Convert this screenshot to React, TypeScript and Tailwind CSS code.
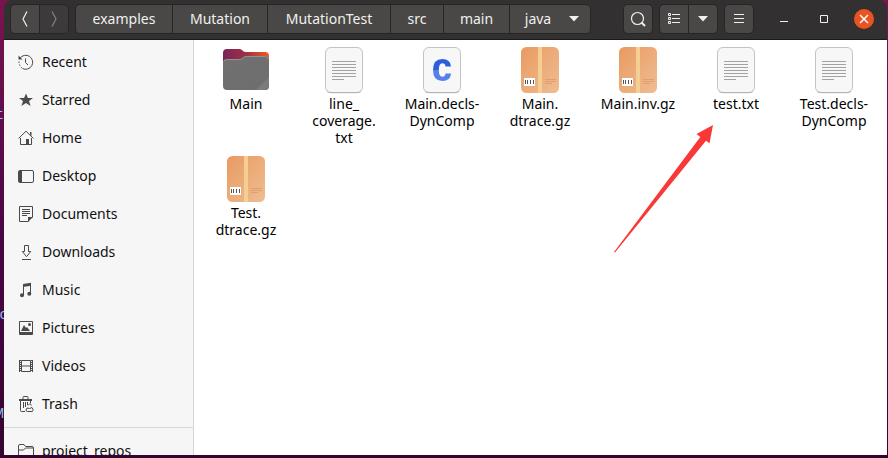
import type { ReactNode } from "react";

type IconName =
  | "recent" | "star" | "home" | "desktop" | "documents"
  | "downloads" | "music" | "pictures" | "videos" | "trash" | "folder";

const iconShapes: Record<IconName, ReactNode> = {
  recent: (
    <>
      <path d="M2 4.200A7 7 0 1 1 4.500 14.500" />
      <path d="M1 7.500Q1 12 4.500 14.500" strokeDasharray="1.500 1.500" />
      <path d="M.5 1.500V5.500H4.500Z" fill="currentColor" stroke="none" />
      <path d="M7.500 4.500V8.500L10 11" />
    </>
  ),
  star: <path d="M8 1.500 9.900 6H15L11 9.100 12.600 14 8 11 3.400 14 5 9.100 1 6H6.100Z" fill="currentColor" stroke="none" />,
  home: (
    <>
      <path d="M.6 8.400 8 1.200 15.400 8.400M2.500 8V14.500H13.500V8" />
      <path d="M8 9h3v6H8zM12 2h1.500v4L12 4.600z" fill="currentColor" stroke="none" />
    </>
  ),
  desktop: (
    <>
      <rect x=".5" y="2.500" width="15" height="12" rx="1.500" />
      <path d="M1 3h3v11H1z" fill="currentColor" stroke="none" />
    </>
  ),
  documents: (
    <>
      <path d="M10.500 15.500h-9V.5h13V11.500M4 3.500h8M4 5.500h8M4 7.500h8M4 9.500h5" />
      <path d="M10 16v-5h5z" fill="currentColor" stroke="none" />
    </>
  ),
  downloads: <path d="M6.500 1.500h4v6h2.200L8.500 12.700 4.300 7.500h2.200zM4 15.500h9" />,
  music: (
    <>
      <path d="M5.500 13V3M12.500 11.500V2" />
      <path d="M5 2 13 .8V3.800L5 5Z" fill="currentColor" stroke="none" />
      <circle cx="4" cy="13.200" r="2" fill="currentColor" stroke="none" />
      <circle cx="11.300" cy="11.800" r="2" fill="currentColor" stroke="none" />
    </>
  ),
  pictures: (
    <>
      <path d="M1.500 1.500h13v13h-13z" />
      <path d="M2 12h12v3H2zM3 11 6 5l2 3 1-1 3 4z" fill="currentColor" stroke="none" />
      <circle cx="11.500" cy="4.500" r="1.500" fill="currentColor" stroke="none" />
    </>
  ),
  videos: (
    <>
      <path d="M3.500 2.500h9v11h-9zM3 8h10M1.500 2v12M14.500 2v12" />
      <path d="M2.500 2v12M13.500 2v12" strokeDasharray="1 1" />
    </>
  ),
  trash: (
    <>
      <path d="M2.500 5v9.500q0 1 1 1H7M5.500 6v6M7.500 6v5M9.500 6v3M12.500 5v2" />
      <path d="M1 3h13v2H1z" fill="currentColor" stroke="none" />
      <path d="M5 3V1.500q0-1 1-1h3q1 0 1 1V3" />
      <path d="M10 9.500l2-2 1.500 2M9 12l-1 2q0 1.500 1.500 1.500h4.500q1.500-.5 1-2L14 11.500l-2.500 1z" />
    </>
  ),
  folder: <path d="M.5 14V3q0-1.500 1.500-1.500h4L7.500 3.500H14q1.500 0 1.500 1.500v9M.5 7h5l2-2H15" />,
};

function SideIcon({ name }: { name: IconName }) {
  return (
    <svg viewBox="0 0 16 16" className="size-4 shrink-0 text-[#4a4a4a]" fill="none" stroke="currentColor" strokeWidth="1" aria-hidden="true">
      {iconShapes[name]}
    </svg>
  );
}

const places: { icon: IconName; label: string }[] = [
  { icon: "recent", label: "Recent" },
  { icon: "star", label: "Starred" },
  { icon: "home", label: "Home" },
  { icon: "desktop", label: "Desktop" },
  { icon: "documents", label: "Documents" },
  { icon: "downloads", label: "Downloads" },
  { icon: "music", label: "Music" },
  { icon: "pictures", label: "Pictures" },
  { icon: "videos", label: "Videos" },
  { icon: "trash", label: "Trash" },
];

function Place({ icon, label }: { icon: IconName; label: string }) {
  return (
    <li>
      <button className="flex h-[38px] w-full items-center gap-2 px-3.5 text-left">
        <SideIcon name={icon} />
        <span>{label}</span>
      </button>
    </li>
  );
}

type Kind = "folder" | "text" | "c" | "archive";

function FileIcon({ kind }: { kind: Kind }) {
  return (
    <svg viewBox="0 0 48 48" className="size-12" aria-hidden="true">
      {kind === "folder" && (
        <>
          <defs>
            <linearGradient id="folderBack">
              <stop offset="0" stopColor="#7b2459" />
              <stop offset=".5" stopColor="#9c3045" />
              <stop offset="1" stopColor="#f25a22" />
            </linearGradient>
            <linearGradient id="folderFront" x2="1" y2="1">
              <stop offset="0" stopColor="#707070" />
              <stop offset="1" stopColor="#6e6e6e" />
            </linearGradient>
          </defs>
          <path d="M1 17V6q0-4 4-4h12q2 0 3 1l1 1q1 1 3 1h19q4 0 4 4v8z" fill="url(#folderBack)" />
          <path d="M1 16q0-4 4-4h12q2 0 3-1l1-1q1-1 3-1h19q4 0 4 4v26q0 4-4 4H5q-4 0-4-4z" fill="url(#folderFront)" />
          <path d="M34 43 47 30v9q0 4-4 4z" fill="#7b7b7b" />
          <path d="M1.500 15q.5-2.500 4-2.500h12q2 0 3-1l1-1q1-1 3-1h18q4 0 4.500 3.500" fill="none" stroke="#a0a0a0" strokeWidth=".7" />
        </>
      )}
      {(kind === "text" || kind === "c") && (
        <>
          <rect x="5.500" y=".5" width="37" height="45" rx="5.500" fill="#f7f7f7" stroke="#c3c3c3" />
          <path d="M7 44.500q1.500 1.200 4 1.200h26q2.500 0 4-1.200" fill="none" stroke="#aaa" strokeWidth=".8" />
        </>
      )}
      {kind === "text" && <path d="M12 14.500h24M12 17.500h24M12 20.500h24M12 23.500h24M12 26.500h24M12 29.500h24M12 32.500h12" stroke="#a2a2a2" strokeWidth="1" />}
      {kind === "c" && (
        <>
          <defs>
            <linearGradient id="cTone" x2="0" y2="1">
              <stop offset=".5" stopColor="#2d5fd8" />
              <stop offset=".5" stopColor="#5681e8" />
            </linearGradient>
          </defs>
          <path d="M33 19.500Q32.500 12 24.300 12Q15 12 15 23T24.300 34Q32.500 34 33 26.500H27.500Q27.200 29.800 24.300 29.800Q20.800 29.800 20.800 23T24.300 16.200Q27.200 16.200 27.500 19.500Z" fill="url(#cTone)" />
        </>
      )}
      {kind === "archive" && (
        <>
          <defs>
            <linearGradient id="boxTone" x2="1" y2="1">
              <stop offset="0" stopColor="#e99a61" />
              <stop offset="1" stopColor="#efbd92" />
            </linearGradient>
          </defs>
          <rect x="5" y="0" width="38" height="46" rx="5.500" fill="url(#boxTone)" />
          <path d="M22 0h4v46h-4z" fill="#f4cf94" />
          <path d="M8 31h11v8H8z" fill="#fff" />
          <path d="M9.500 33v4M11.500 33v4M14.500 33v4M17.500 33v4" stroke="#555" />
          <path d="M29 32.500h11M29 34.500h11M29 36.500h7" stroke="#dc9968" strokeWidth=".8" />
        </>
      )}
    </svg>
  );
}

const files: { kind: Kind; lines: string[] }[] = [
  { kind: "folder", lines: ["Main"] },
  { kind: "text", lines: ["line_", "coverage.", "txt"] },
  { kind: "c", lines: ["Main.decls-", "DynComp"] },
  { kind: "archive", lines: ["Main.", "dtrace.gz"] },
  { kind: "archive", lines: ["Main.inv.gz"] },
  { kind: "text", lines: ["test.txt"] },
  { kind: "text", lines: ["Test.decls-", "DynComp"] },
  { kind: "archive", lines: ["Test.", "dtrace.gz"] },
];

const toolButton = "flex h-7 w-7 items-center justify-center bg-[#494846] text-[#f0f0ee]";
const group = "flex shrink-0 gap-px overflow-hidden rounded-sm bg-[#262525] ring-1 ring-[#272626]";
const crumb = "flex h-7 items-center justify-center bg-[#494846]";

const crumbs = [
  { label: "examples", width: "w-24" },
  { label: "Mutation", width: "w-[94px]" },
  { label: "MutationTest", width: "w-[122px]" },
  { label: "src", width: "w-[52px]" },
  { label: "main", width: "w-[65px]" },
];

function Caret() {
  return (
    <svg viewBox="0 0 10 6" className="h-1.5 w-2.5" fill="currentColor" aria-hidden="true">
      <path d="M0 0h10L5 5.500z" />
    </svg>
  );
}

function Header() {
  return (
    <header className="flex h-10 shrink-0 items-start rounded-t-lg border-b border-[#1b1a1a] bg-[#333031] pt-[5px] pr-[13px] pl-[7px] text-[#f0f0ee]">
      <div className={group}>
        <button className={toolButton} aria-label="Back">
          <svg viewBox="0 0 6 16" className="h-4 w-1.5" fill="none" stroke="currentColor" strokeWidth="1.2"><path d="M5 .5 1 8l4 7.500" /></svg>
        </button>
        <button className="flex h-7 w-7 items-center justify-center bg-[#3c3a3a] text-[#858383]" aria-label="Forward">
          <svg viewBox="0 0 6 16" className="h-4 w-1.5" fill="none" stroke="currentColor" strokeWidth="1.2"><path d="m1 .5 4 7.500-4 7.500" /></svg>
        </button>
      </div>
      <nav className={`${group} ml-2`} aria-label="Path">
        {crumbs.map((c) => (
          <button key={c.label} className={`${crumb} ${c.width}`}>{c.label}</button>
        ))}
        <button className={`${crumb} w-20 gap-[18px] pl-1`}>java<Caret /></button>
      </nav>
      <div className="ml-auto flex gap-2">
        <div className={group}>
          <button className={toolButton} aria-label="Search">
            <svg viewBox="0 0 16 16" className="size-4" fill="none" stroke="currentColor" strokeWidth="1.2"><circle cx="7.500" cy="7.500" r="6" /><path d="m11.500 11.500 3.500 3.500" strokeWidth="2" /></svg>
          </button>
        </div>
        <div className={group}>
          <button className={toolButton} aria-label="List view">
            <svg viewBox="0 0 16 16" className="size-4" fill="none" stroke="currentColor"><path d="M2.500 2.500h2v2h-2zM2.500 6.500h2v2h-2zM2.500 10.500h2v2h-2zM6 3.500h8M6 7.500h8M6 11.500h8" /></svg>
          </button>
          <button className={toolButton} aria-label="View options"><Caret /></button>
        </div>
        <div className={group}>
          <button className={toolButton} aria-label="Menu">
            <svg viewBox="0 0 16 16" className="size-4" fill="none" stroke="currentColor"><path d="M3 3.500h10M3 7.500h10M3 11.500h10" /></svg>
          </button>
        </div>
      </div>
      <div className="ml-[21px] flex h-7 items-center gap-5">
        <button className="flex size-5 items-center justify-center" aria-label="Minimize">
          <svg viewBox="0 0 16 16" className="size-4" stroke="currentColor"><path d="M4 10.500h8" /></svg>
        </button>
        <button className="flex size-5 items-center justify-center" aria-label="Maximize">
          <svg viewBox="0 0 16 16" className="size-4" fill="none" stroke="currentColor"><path d="M4.500 4.500h7v7h-7z" /></svg>
        </button>
        <button className="flex size-5 items-center justify-center rounded-full bg-[#e95420] text-white" aria-label="Close">
          <svg viewBox="0 0 16 16" className="size-4" stroke="currentColor" strokeWidth="1.5"><path d="m4 4 8 8M12 4l-8 8" /></svg>
        </button>
      </div>
    </header>
  );
}

export default function App() {
  return (
    <div className="relative flex h-screen flex-col overflow-hidden bg-linear-to-b from-[#7a1450] via-[#4b0645] to-[#35052f] pr-px pb-[3px] pl-1 font-['Noto_Sans',sans-serif] text-sm">
      <div className="absolute inset-y-0 left-0 w-1 overflow-hidden font-['Liberation_Mono',monospace] text-sm leading-4 text-[#8fc4ee]" aria-hidden="true">
        <span className="absolute top-[107px] right-0">t</span>
        <span className="absolute top-[307px] -right-1">ro</span>
        <span className="absolute top-[406px] right-0">M</span>
      </div>
      <Header />
      <div className="flex min-h-0 grow">
        <aside className="w-[190px] shrink-0 overflow-hidden border-r border-[#d5d5d5] bg-[#f6f6f6] pt-[3px] text-[#111]">
          <ul>
            {places.map((p) => <Place key={p.label} {...p} />)}
          </ul>
          <ul className="mt-1 border-t border-[#d8d8d8] pt-1">
            <Place icon="folder" label="project_repos" />
          </ul>
        </aside>
        <main className="relative grow overflow-hidden bg-white pt-[7px] pl-[3px] text-black">
          <ul className="grid grid-cols-[repeat(auto-fill,98px)] gap-y-2.5">
            {files.map((f) => (
              <li key={f.lines.join("")}>
                <button className="flex w-full flex-col items-center leading-[17px]">
                  <FileIcon kind={f.kind} />
                  {f.lines.map((line) => <span key={line}>{line}</span>)}
                </button>
              </li>
            ))}
          </ul>
          <svg viewBox="0 0 100 130" className="absolute top-[84px] left-[419px] h-[130px] w-[100px]" aria-hidden="true">
            <path d="m100 1-16.500 9 3.800 3L1 128l1 .5 91-111.800 3.500 2.600z" fill="#fb3838" />
          </svg>
        </main>
      </div>
    </div>
  );
}
